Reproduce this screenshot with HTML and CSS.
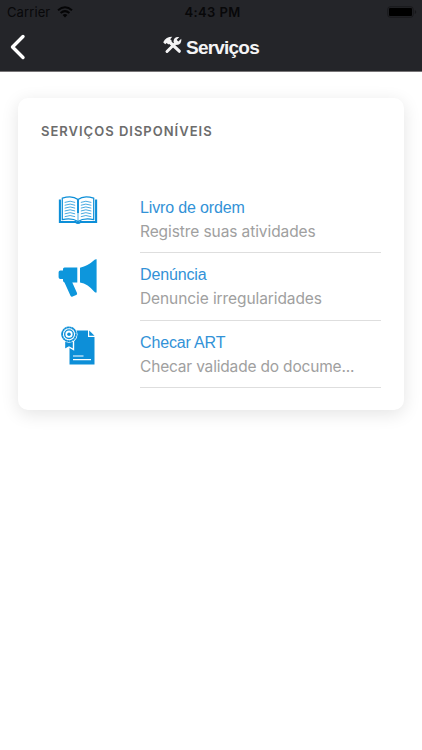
FILE: index.html
```
<!DOCTYPE html>
<html lang="pt-BR">
<head>
<meta charset="utf-8">
<title>Serviços</title>
<link rel="stylesheet" href="styles.css">
</head>
<body>
<header class="header">
  <div class="status">
    <div class="status-left"><span class="carrier">Carrier</span>
      <svg class="wifi" width="16" height="12" viewBox="0 0 16 12" fill="none" stroke="#050506" stroke-width="2"><path d="M1 4.3Q8-1.7 15 4.3M3.6 7Q8 3.3 12.4 7"/><path d="M8 11.500 5.600 9Q8 7.200 10.400 9Z" fill="#050506" stroke="none"/></svg>
    </div>
    <span class="time">4:43 PM</span>
    <div class="status-right"><svg width="30" height="12" viewBox="0 0 30 12"><rect x=".8" y=".8" width="25.4" height="10.4" rx="2.4" fill="none" stroke="#18181b"/><rect x="2" y="2" width="23" height="8" rx="1" fill="#000"/><path d="M27.800 4v4q1.400-.6 1.400-2t-1.400-2Z" fill="#18181b"/></svg></div>
  </div>
  <nav class="nav">
    <svg class="back" width="16" height="26" viewBox="0 0 16 26" fill="none" stroke="#fff" stroke-width="3.4" stroke-linecap="round" stroke-linejoin="round"><path d="M13 2.500 2.500 13 13 23.500"/></svg>
    <div class="title">
      <svg width="19" height="18" viewBox="0 0 19 18" fill="none" stroke="#f4f4f5"><path d="M6 5.500 16.300 15.200" stroke-width="3.200" stroke-linecap="round"/><path d="M.2 6.200Q3 .8 9.200.8L7.200 3.200 9 5 5.400 8.600 3.700 6.900 2.200 8.200Z" fill="#f4f4f5" stroke="none"/><path d="M12.600 7 4 15.500" stroke-width="3" stroke-linecap="round"/><path d="M16.300 1 13.700 3.800 15.300 5.400 18.300 2.800Q19 9 13.500 8.900L10.500 5.900Q10.500.3 16.300 1Z" fill="#f4f4f5" stroke="none"/></svg>
      <h1>Serviços</h1>
    </div>
  </nav>
</header>
<main class="card">
  <h2>SERVIÇOS DISPONÍVEIS</h2>
  <ul class="list">
    <li class="item">
      <svg class="icon book" width="40" height="40" viewBox="0 0 42 42" fill="none" stroke="#0d8fd8"><path d="M2 9V32.500H18.500Q21 34.500 23.500 32.500H40V9" stroke-width="2.200"/><path d="M4.500 30V7.500Q15 4 21 9Q27 4 37.500 7.500V30Q27 28 21 32Q15 28 4.500 30Z" stroke-width="1.300"/><path d="M21 9V23" stroke-width="2"/><path d="M21 23V32" stroke-width=".8"/><path d="M7 12Q13 9.500 18 12M7 15Q13 12.500 18 15M7 18Q13 15.500 18 18M7 21Q13 18.500 18 21M7 24Q13 21.500 18 24M7 27Q13 24.500 18 27M24 12Q29 9.500 35 12M24 15Q29 12.500 35 15M24 18Q29 15.500 35 18M24 21Q29 18.500 35 21M24 24Q29 21.500 35 24M24 27Q29 24.500 35 27" stroke-width=".8"/></svg>
      <div class="copy"><h3>Livro de ordem</h3><p>Registre suas atividades</p></div>
    </li>
    <li class="item">
      <svg class="icon horn" width="42" height="42" viewBox="0 0 42 42" fill="#0d96dc"><path d="M6 10Q6 8.500 7.500 8.500H20.300V23.500H15.300L20 34Q20.600 35.500 19.200 36.100L15.600 37.600Q14.200 38.200 13.500 36.700L7.500 23.500Q6 23 6 21.500V20H3.300Q1.600 20 1.600 18.200V13.300Q1.600 11.500 3.300 11.500H6Z"/><path d="M23 8.700Q31 7 37.600.8Q38.500 0 39.600.3V33.500Q38.500 33.800 37.600 33Q31 24.800 23 23.400Z"/></svg>
      <div class="copy"><h3>Denúncia</h3><p>Denuncie irregularidades</p></div>
    </li>
    <li class="item">
      <svg class="icon doc" width="42" height="42" viewBox="0 0 42 42" fill="#0d8fd8"><path d="M12.500 3.500H31V10H37.500V37.500H12.500Z"/><path d="M32.200 3.500 37.500 8.800H32.200Z"/><path d="M7.500 14V22.500L12 20 16.500 22.500V14Z" stroke="#fff" stroke-width="1.400"/><circle cx="12" cy="7.200" r="8.500" fill="#fff"/><circle cx="12" cy="7.200" r="6.900" fill="none" stroke="#0d8fd8" stroke-width="1.800" stroke-dasharray="2.300 .2"/><circle cx="12" cy="7.200" r="4.300" fill="none" stroke="#0d8fd8" stroke-width="1.400"/><circle cx="12" cy="7.200" r="1.800"/><path d="M16 29H26.500M16 32.700H34" stroke="#fff" stroke-width="1.200"/></svg>
      <div class="copy"><h3>Checar ART</h3><p>Checar validade do docume...</p></div>
    </li>
  </ul>
</main>
</body>
</html>
```
FILE: styles.css
```
* { box-sizing: border-box; }
body { margin: 0; min-height: 750px; background: #fff; font-family: Inter, "Liberation Sans", sans-serif; }
h1, h2, h3, p, ul { margin: 0; padding: 0; }
svg { display: block; }
.header { height: 72px; background: #242529; border-bottom: 1px solid #777476; }
.status { height: 23px; display: grid; grid-template-columns: 1fr auto 1fr; align-items: center; padding: 0 5px 0 7px; color: #080809; font-size: 13px; }
.status-left { display: flex; align-items: center; gap: 7px; }
.carrier { letter-spacing: .1px; }
.time { font-weight: 600; letter-spacing: .4px; padding-left: 1px; }
.status-right { display: flex; justify-content: flex-end; }
.nav { height: 48px; display: grid; grid-template-columns: 1fr auto 1fr; align-items: center; padding: 0 10px; }
.title { display: flex; align-items: center; gap: 4px; color: #f4f4f5; }
.title svg { margin-top: -4px; }
h1 { font: 700 19px/24px "Liberation Sans", sans-serif; letter-spacing: -.8px; padding-top: 1px; }
.card { margin: 26px 18px 0; height: 312px; padding: 24px 23px 0; border-radius: 10px; background: #fff; box-shadow: 0 4px 18px rgba(0, 0, 0, .11); }
h2 { font-size: 13px; line-height: 18px; font-weight: 600; letter-spacing: 1px; color: #6c6c6c; }
.list { list-style: none; margin-top: 45.5px; }
.item { height: 67.5px; display: grid; grid-template-columns: 99px 1fr; }
.icon { margin: 5px 0 0 16px; overflow: visible; }
.book { margin-left: 17px; }
.horn, .doc { margin-top: 6px; }
.copy { border-bottom: 1px solid #dedede; padding-top: 10.4px; }
h3 { font: 400 16px/24px "Liberation Sans", sans-serif; letter-spacing: -.15px; color: #3292d7; }
p { font-size: 15.5px; line-height: 23px; letter-spacing: -.09px; color: #a0a0a0; white-space: nowrap; }
.item:last-child p { letter-spacing: -.18px; }
```
